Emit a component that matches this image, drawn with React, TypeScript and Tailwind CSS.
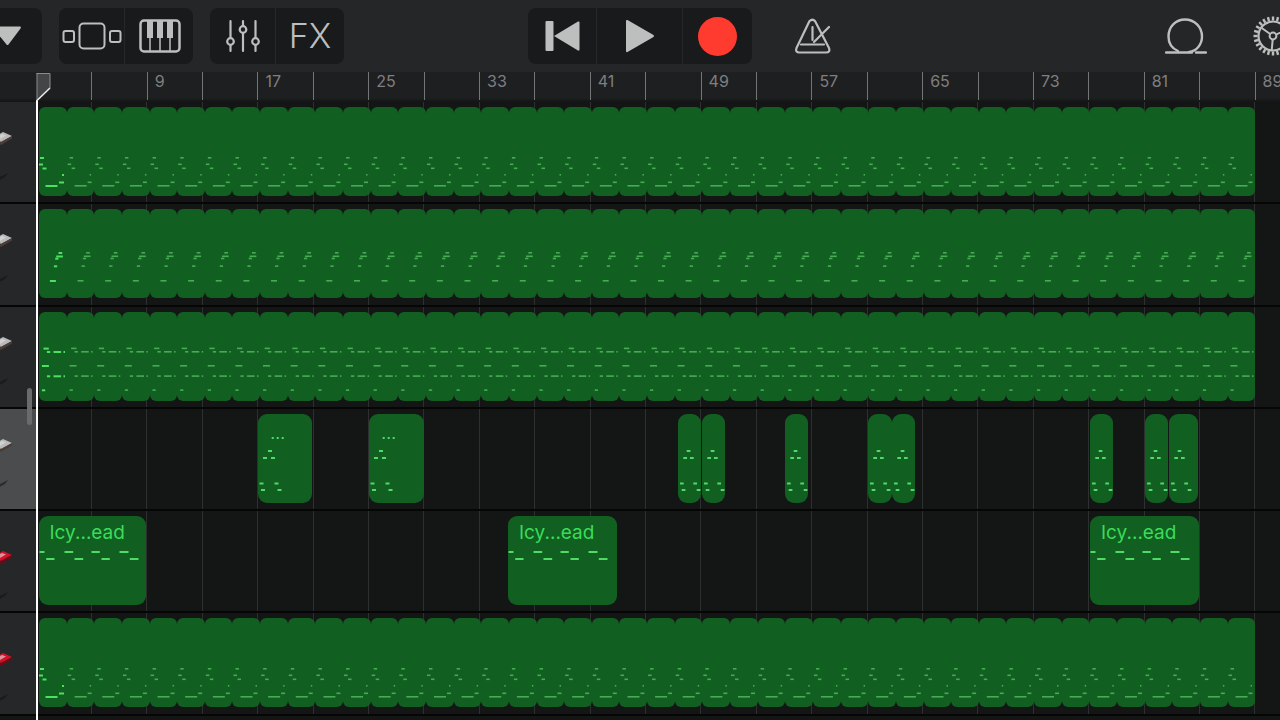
import React from 'react'

type Note = [number, number, number]

const iconColor = '#bdbebe'

const rowOneFirst: Note[] = [[1, 50, 4], [0, 56.5, 4], [3.5, 60.5, 4], [23, 67, 2], [20, 74.5, 5], [6.5, 78, 12]]
const rowOneRest: Note[] = [[3, 50, 3.5], [1, 56.5, 3.5], [5, 60.5, 3.5], [23, 67, 1.5], [21, 74.5, 4], [8, 78, 12]]
const rowTwoNotes: Note[] = [[19.5, 43, 3.7], [17.2, 46.5, 6.7], [16.2, 48.7, 3.3], [14.9, 56.3, 3.3], [10.9, 71, 6]]
const rowThreeNotes: Note[] = [
  [4.5, 35.6, 5.3], [7.9, 39, 3.3], [14.5, 39, 7.6], [24.5, 39, 1.5],
  [2.9, 53, 7], [7.9, 63.3, 3.3], [14.5, 63.3, 7.6], [24.5, 63.3, 1.5], [2.9, 77.3, 3.3],
]
const longPhrase: Note[] = [
  [13.7, 23, 2], [18.7, 23, 2], [23.7, 23, 2], [10, 36, 4], [5, 43, 4], [13, 43, 4],
  [1.5, 68.5, 4], [16.5, 68.5, 4], [3, 75, 4], [19.5, 75, 4],
]
const shortPhrase: Note[] = [[8.7, 36, 3.7], [5.3, 43, 3.7], [12, 43, 3.7], [2, 68.5, 3.7], [15.3, 68.5, 3.7], [3.7, 75, 3.7], [18.7, 75, 3.7]]
const leadPhrase: Note[] = [
  [0.5, 35, 5], [25.5, 35, 8.7], [52.5, 35, 8.3], [80.5, 35, 9],
  [7.2, 42, 8.3], [35.5, 42, 8.7], [62.5, 42, 8.3], [90.8, 42, 8.7],
]

function Notes({ notes, color, height = 2 }: { notes: Note[]; color: string; height?: number }) {
  return (
    <>
      {notes.map(([x, y, w], i) => (
        <rect key={i} x={x} y={y} width={w} height={height} fill={color} />
      ))}
    </>
  )
}

// a full-length looped region, one lobe per two bars
function LoopRegion({ first, rest }: { first: Note[]; rest: Note[] }) {
  const lobes = Array.from({ length: 44 }, (_, i) => i)
  return (
    <div className="absolute left-[3px] top-[5px] flex h-[89px] w-[1216px]">
      {lobes.map((i) => (
        <div key={i} className="flex-1 rounded-[6px] bg-[#115f21]" />
      ))}
      <svg className="absolute inset-0" width="1216" height="89">
        {lobes.map((i) => (
          <g key={i} transform={`translate(${i * 27.64} 0)`}>
            <Notes notes={i === 0 ? first : rest} color={i === 0 ? '#4be060' : '#46ab53'} height={i === 0 ? 2 : 1.6} />
          </g>
        ))}
      </svg>
    </div>
  )
}

function Clip({ x, w, notes, label }: { x: number; w: number; notes: Note[]; label?: string }) {
  return (
    <div className="absolute top-[5px] h-[89px] rounded-[9px] bg-[#115f21]" style={{ left: x - 36, width: w }}>
      {label && <div className="pl-[11px] pt-[5px] text-[19px] leading-[24px] text-[#3bdc5a]">{label}</div>}
      <svg className="absolute inset-0" width={w} height="89">
        <Notes notes={notes} color="#4fdc66" />
      </svg>
    </div>
  )
}

function KeyboardThumb({ red }: { red?: boolean }) {
  return (
    <svg width="36" height="60" viewBox="0 0 36 60" className="block">
      <path d="M-8 6 L3 0 L12 4 L1 10 Z" fill={red ? '#d3122a' : '#b9b9ba'} />
      <path d="M-8 6 L1 10 L12 4 L12 6.5 L1 13 L-8 9 Z" fill={red ? '#6d0a18' : '#4c3c38'} />
      <path d="M-6 6 L2 2 L6 3.5 L-2 8 Z" fill="#e6e6e6" opacity={red ? 0.6 : 0.55} />
      <path d="M-4 47 L8 41 L5 45 L-4 50 Z" fill="#111213" opacity="0.55" />
    </svg>
  )
}

function TrackHeader({ selected, red }: { selected?: boolean; red?: boolean }) {
  return (
    <div className={`h-full w-[36px] shrink-0 ${red ? 'pt-[40px]' : 'pt-[30px]'} ${selected ? 'bg-[#4b4c4d]' : 'bg-[#262728]'}`}>
      <KeyboardThumb red={red} />
    </div>
  )
}

function TrackRow({ selected, red, children }: { selected?: boolean; red?: boolean; children?: React.ReactNode }) {
  const ticks = Array.from({ length: 23 }, (_, i) => i)
  return (
    <div className="flex h-[102.3px] border-b-2 border-[#060606]">
      <TrackHeader selected={selected} red={red} />
      <div className="relative flex-1 bg-[#141515]">
        <div className="absolute inset-0 flex pl-[0.7px]">
          {ticks.map((i) => (
            <div key={i} className="h-full w-[55.4px] shrink-0 border-r border-[#2e2f2f]" />
          ))}
        </div>
        {children}
      </div>
    </div>
  )
}

function Ruler() {
  const ticks = Array.from({ length: 22 }, (_, i) => i)
  return (
    <div className="flex h-[30px] bg-[linear-gradient(#1e1f20_0,#1e1f20_26px,#131414_30px)]">
      <div className="w-[91.3px] shrink-0" />
      {ticks.map((i) => (
        <div key={i} className="h-[28px] w-[55.4px] shrink-0 border-l border-[#747576] pl-[7px] text-[16px] leading-[18px] text-[#7e7f80]">
          {i % 2 === 1 ? 9 + ((i - 1) / 2) * 8 : ''}
        </div>
      ))}
    </div>
  )
}

function ToolGroup({ className, children }: { className: string; children: React.ReactNode }) {
  return <div className={`flex h-[56px] shrink-0 divide-x divide-[#26272a] bg-[#191a1b] ${className}`}>{children}</div>
}

function ToolCell({ width, children }: { width: string; children: React.ReactNode }) {
  return <div className={`flex h-full items-center justify-center ${width}`}>{children}</div>
}

function TracksIcon() {
  return (
    <svg width="60" height="28" viewBox="0 0 60 28" fill="none" stroke={iconColor} strokeWidth="2">
      <rect x="1.5" y="9" width="10.5" height="11" rx="2" />
      <rect x="17.5" y="1.5" width="25" height="25" rx="4" />
      <rect x="48" y="9" width="10.5" height="11" rx="2" />
    </svg>
  )
}

function PianoIcon() {
  return (
    <svg width="42" height="34" viewBox="0 0 42 34" fill="none" className="ml-[2px]">
      <rect x="1.5" y="1.5" width="39" height="31" rx="3.5" stroke={iconColor} strokeWidth="2.5" />
      <rect x="8" y="2" width="6" height="17" fill={iconColor} />
      <rect x="18" y="2" width="6" height="17" fill={iconColor} />
      <rect x="28" y="2" width="6" height="17" fill={iconColor} />
      <path d="M11 19V32M21 19V32M31 19V32" stroke={iconColor} strokeWidth="1.5" />
    </svg>
  )
}

function MixerIcon() {
  return (
    <svg width="34" height="34" viewBox="0 0 34 34" fill="none" stroke={iconColor} strokeWidth="2.2">
      <path d="M4.5 2V19M4.5 26V32M17 2V7M17 14V32M29.5 2V19M29.5 26V32" strokeLinecap="round" />
      <circle cx="4.5" cy="22.5" r="3.3" />
      <circle cx="17" cy="10.5" r="3.3" />
      <circle cx="29.5" cy="22.5" r="3.3" />
    </svg>
  )
}

function PrevIcon() {
  return (
    <svg width="35" height="32" viewBox="0 0 35 32" fill={iconColor}>
      <rect x="0.5" y="1" width="8" height="30" rx="1" />
      <path d="M9 16 L33 1.5 Q34.5 1 34.5 2.5 V29.5 Q34.5 31 33 30.5 Z" />
    </svg>
  )
}

function PlayIcon() {
  return (
    <svg width="30" height="34" viewBox="0 0 30 34" fill={iconColor}>
      <path d="M1 2 Q1 0.5 2.5 1 L28.5 16 Q29.5 17 28.5 18 L2.5 33 Q1 33.5 1 32 Z" />
    </svg>
  )
}

function MetronomeIcon() {
  return (
    <svg width="36" height="36" viewBox="0 0 36 36" fill="none" stroke={iconColor} strokeWidth="2.2" strokeLinecap="round" strokeLinejoin="round">
      <path d="M14.5 3 Q17.5 0.5 20 3 L34 30 Q35.5 34.5 31 34.5 H4.5 Q0 34.5 1.5 30 Z" />
      <path d="M17.5 9V22M19 24L34 9M6 26.5H29" />
    </svg>
  )
}

function LoopIcon() {
  return (
    <svg width="42" height="36" viewBox="0 0 42 36" fill="none" stroke={iconColor} strokeWidth="2.4" strokeLinecap="round">
      <path d="M13 33 C6 30 3.5 24.5 3.5 18.5 C3.5 9 10.5 1.5 20 1.5 C29.5 1.5 37 9 37 18.5 C37 26 32 33 24 34" />
      <path d="M1 34.5H27M31 34.5H41" />
    </svg>
  )
}

function GearIcon() {
  const teeth = Array.from({ length: 24 }, (_, i) => i * 15)
  return (
    <svg width="40" height="40" viewBox="-20 -20 40 40" fill="none" stroke={iconColor}>
      <circle r="14.5" strokeWidth="2.2" />
      {teeth.map((a) => (
        <rect key={a} x="-1.2" y="-19.5" width="2.4" height="4" fill={iconColor} stroke="none" transform={`rotate(${a})`} />
      ))}
      <circle r="3.4" strokeWidth="2" />
      <path d="M-2.8 -2 L-12 -8.5 M3 -1.4 L13.5 -6.3 M-0.3 3.4 L-1.3 14.5" strokeWidth="2" />
    </svg>
  )
}

function Toolbar() {
  return (
    <div className="flex h-[72px] shrink-0 items-center bg-[#252627]">
      <ToolGroup className="w-[42px] rounded-r-lg">
        <div className="flex h-full w-full items-center">
          <svg width="22" height="20" viewBox="0 0 22 20" fill={iconColor}>
            <path d="M-8 0.5 H20 Q21.5 0.5 20.5 2.5 L8.5 18.5 Q7.5 19.5 6.5 18.5 Z" />
          </svg>
        </div>
      </ToolGroup>
      <ToolGroup className="ml-[17px] w-[134px] rounded-lg">
        <ToolCell width="w-[66px]"><TracksIcon /></ToolCell>
        <ToolCell width="w-[68px]"><PianoIcon /></ToolCell>
      </ToolGroup>
      <ToolGroup className="ml-[17px] w-[134px] rounded-lg">
        <ToolCell width="w-[66px]"><MixerIcon /></ToolCell>
        <ToolCell width="w-[68px]">
          <span className="text-[34px] font-light leading-none text-[#bdbebe]">FX</span>
        </ToolCell>
      </ToolGroup>
      <ToolGroup className="ml-[184px] w-[224px] rounded-lg">
        <ToolCell width="w-[69px]"><PrevIcon /></ToolCell>
        <ToolCell width="w-[86px]"><PlayIcon /></ToolCell>
        <ToolCell width="w-[69px]"><div className="h-[39px] w-[39px] rounded-full bg-[#ff3b30]" /></ToolCell>
      </ToolGroup>
      <div className="ml-[43px]"><MetronomeIcon /></div>
      <div className="ml-[334px]"><LoopIcon /></div>
      <div className="ml-[46px] shrink-0"><GearIcon /></div>
    </div>
  )
}

export default function App() {
  return (
    <div className="relative flex h-[720px] w-[1280px] flex-col overflow-hidden bg-[#141515] font-['Inter',sans-serif]">
      <Toolbar />
      <Ruler />
      <TrackRow>
        <LoopRegion first={rowOneFirst} rest={rowOneRest} />
      </TrackRow>
      <TrackRow>
        <LoopRegion first={rowTwoNotes} rest={rowTwoNotes} />
      </TrackRow>
      <TrackRow>
        <LoopRegion first={rowThreeNotes} rest={rowThreeNotes} />
      </TrackRow>
      <TrackRow selected>
        <Clip x={258} w={54} notes={longPhrase} />
        <Clip x={369} w={55} notes={longPhrase} />
        <Clip x={678} w={23} notes={shortPhrase} />
        <Clip x={701.5} w={23} notes={shortPhrase} />
        <Clip x={785} w={23} notes={shortPhrase} />
        <Clip x={867.5} w={24} notes={shortPhrase} />
        <Clip x={892} w={23} notes={shortPhrase} />
        <Clip x={1090} w={23} notes={shortPhrase} />
        <Clip x={1145} w={23} notes={shortPhrase} />
        <Clip x={1169} w={29} notes={shortPhrase} />
      </TrackRow>
      <TrackRow red>
        <Clip x={38.5} w={107.5} notes={leadPhrase} label="Icy...ead" />
        <Clip x={508} w={108.5} notes={leadPhrase} label="Icy...ead" />
        <Clip x={1090} w={108.5} notes={leadPhrase} label="Icy...ead" />
      </TrackRow>
      <TrackRow red>
        <LoopRegion first={rowOneFirst} rest={rowOneRest} />
      </TrackRow>
      {/* playhead and its flag lie over the ruler and the lanes */}
      <div className="absolute bottom-0 left-[36px] top-[100px] w-[2px] bg-white" />
      <svg className="absolute left-[36px] top-[73px]" width="16" height="29" viewBox="0 0 16 29">
        <path d="M0.5 0.5 H14 V15 L1 27.5 V0.5 Z" fill="#444546" stroke="#8b8c8d" strokeWidth="1" />
        <path d="M14 15 L1 27.5" stroke="#e8e8e8" strokeWidth="1.6" />
      </svg>
      <div className="absolute left-[27px] top-[388px] h-[37px] w-[5px] rounded-full bg-[#6a6b6c]" />
    </div>
  )
}
